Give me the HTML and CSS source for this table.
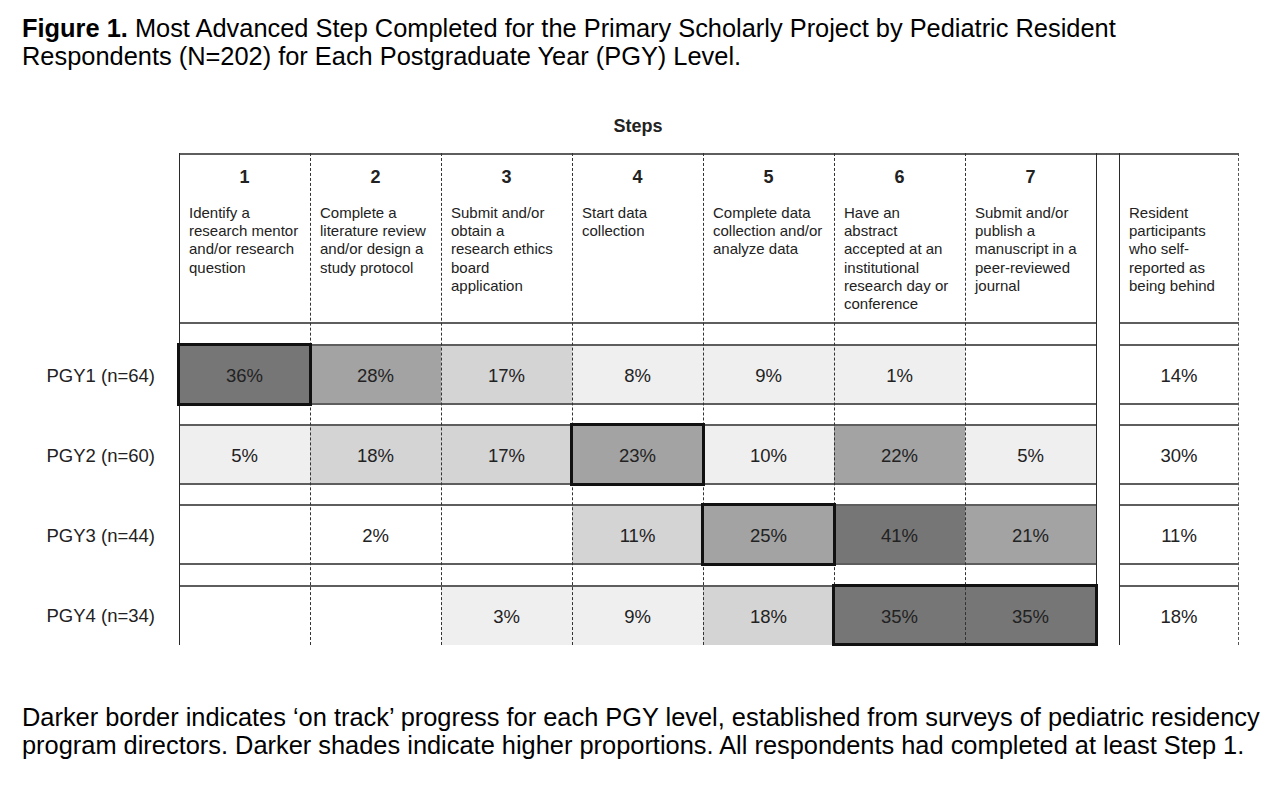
FILE: index.html
```html
<!DOCTYPE html>
<html lang="en">
<head>
<meta charset="utf-8">
<title>Figure 1</title>
<link rel="stylesheet" href="styles.css">
</head>
<body>
<h1 class="title"><b>Figure 1.</b> Most Advanced Step Completed for the Primary Scholarly Project by Pediatric Resident<br>Respondents (N=202) for Each Postgraduate Year (PGY) Level.</h1>

<div class="steps-label">Steps</div>

<div class="figure">
  <div class="grid base">
    <!-- header row -->
    <div class="lab"></div>
    <div class="hd"><div class="num">1</div><div class="desc">Identify a<br>research mentor<br>and/or research<br>question</div></div>
    <div class="hd"><div class="num">2</div><div class="desc">Complete a<br>literature review<br>and/or design a<br>study protocol</div></div>
    <div class="hd"><div class="num">3</div><div class="desc">Submit and/or<br>obtain a<br>research ethics<br>board<br>application</div></div>
    <div class="hd"><div class="num">4</div><div class="desc">Start data<br>collection</div></div>
    <div class="hd"><div class="num">5</div><div class="desc">Complete data<br>collection and/or<br>analyze data</div></div>
    <div class="hd"><div class="num">6</div><div class="desc">Have an<br>abstract<br>accepted at an<br>institutional<br>research day or<br>conference</div></div>
    <div class="hd"><div class="num">7</div><div class="desc">Submit and/or<br>publish a<br>manuscript in a<br>peer-reviewed<br>journal</div></div>
    <div class="gaphd"></div>
    <div class="hd"><div class="num"></div><div class="desc">Resident<br>participants<br>who self-<br>reported as<br>being behind</div></div>

    <div class="spacer"></div>

    <!-- PGY1 -->
    <div class="lab">PGY1 (n=64)</div>
    <div class="cell s4">36%</div>
    <div class="cell s3">28%</div>
    <div class="cell s2">17%</div>
    <div class="cell s1">8%</div>
    <div class="cell s1">9%</div>
    <div class="cell s1">1%</div>
    <div class="cell"></div>
    <div class="gap"></div>
    <div class="cell">14%</div>

    <div class="spacer"></div>

    <!-- PGY2 -->
    <div class="lab">PGY2 (n=60)</div>
    <div class="cell s1">5%</div>
    <div class="cell s2">18%</div>
    <div class="cell s2">17%</div>
    <div class="cell s3">23%</div>
    <div class="cell s1">10%</div>
    <div class="cell s3">22%</div>
    <div class="cell s1">5%</div>
    <div class="gap"></div>
    <div class="cell">30%</div>

    <div class="spacer"></div>

    <!-- PGY3 -->
    <div class="lab">PGY3 (n=44)</div>
    <div class="cell"></div>
    <div class="cell">2%</div>
    <div class="cell"></div>
    <div class="cell s2">11%</div>
    <div class="cell s3">25%</div>
    <div class="cell s4">41%</div>
    <div class="cell s3">21%</div>
    <div class="gap"></div>
    <div class="cell">11%</div>

    <div class="spacer"></div>

    <!-- PGY4 -->
    <div class="lab">PGY4 (n=34)</div>
    <div class="cell last"></div>
    <div class="cell last"></div>
    <div class="cell last s1">3%</div>
    <div class="cell last s1">9%</div>
    <div class="cell last s2">18%</div>
    <div class="cell last s4">35%</div>
    <div class="cell last s4">35%</div>
    <div class="gap"></div>
    <div class="cell last">18%</div>
  </div>

  <div class="grid overlay" aria-hidden="true">
    <div class="vl solid c2"></div>
    <div class="vl dash c3"></div>
    <div class="vl dash c4"></div>
    <div class="vl dash c5"></div>
    <div class="vl dash c6"></div>
    <div class="vl dash c7"></div>
    <div class="vl dash c8"></div>
    <div class="vl solid c9"></div>
    <div class="vl solid edge c10"></div>

    <div class="box b1"></div>
    <div class="box b2"></div>
    <div class="box b3"></div>
    <div class="box b4"></div>
  </div>
</div>

<p class="note">Darker border indicates ‘on track’ progress for each PGY level, established from surveys of pediatric residency<br>program directors. Darker shades indicate higher proportions. All respondents had completed at least Step 1.</p>
</body>
</html>
```

FILE: styles.css
```css
* { box-sizing: border-box; }

html, body {
  margin: 0;
  padding: 0;
  background: #ffffff;
}

body {
  font-family: "Liberation Sans", Arial, Helvetica, sans-serif;
  color: #000;
  width: 1286px;
}

.title {
  margin: 0;
  padding: 14px 0 0 22px;
  font-size: 25.4px;
  line-height: 28px;
  font-weight: normal;
}

.title b { font-weight: bold; }

.steps-label {
  margin: 45px 0 0 179px;
  width: 918px;
  text-align: center;
  font-weight: bold;
  font-size: 18px;
  line-height: 22px;
  color: #222;
}

.figure {
  margin-top: 16px;
  display: grid;
}

.grid {
  grid-area: 1 / 1;
  display: grid;
  grid-template-columns: 179px repeat(7, 131px) 23px 120px;
  grid-template-rows: 171px 20px 61px 19px 61px 19px 61px 20px 60px;
}

.overlay { pointer-events: none; }

/* header cells */
.hd {
  border-top: 2px solid #5e5e5e;
  border-bottom: 2px solid #5e5e5e;
  padding: 11px 6px 0 10px;
  color: #222;
}

.num {
  height: 22px;
  line-height: 22px;
  text-align: center;
  font-weight: bold;
  font-size: 18px;
  padding-right: 4px;
}

.desc {
  margin-top: 16px;
  font-size: 15px;
  line-height: 18.2px;
}

.gaphd { border-top: 2px solid #5e5e5e; }

.spacer { grid-column: 1 / -1; }

.lab {
  display: flex;
  align-items: center;
  justify-content: flex-end;
  padding: 2px 24px 0 0;
  font-size: 18.5px;
  color: #222;
}

.cell {
  display: flex;
  align-items: center;
  justify-content: center;
  border-top: 2px solid #5e5e5e;
  border-bottom: 2px solid #5e5e5e;
  padding-top: 2px;
  font-size: 18.5px;
  color: #222;
  background: #ffffff;
}

.cell.last { border-bottom: none; }

.s1 { background: #efefef; }
.s2 { background: #d4d4d4; }
.s3 { background: #a3a3a3; }
.s4 { background: #767676; }

/* vertical rules */
.vl { grid-row: 1 / -1; }
.vl.solid { border-left: 1px solid #2a2a2a; }
.vl.dash { border-left: 1px dashed #333; }
.vl.edge { border-right: 1px dashed #555; }

.c2 { grid-column: 2; }
.c3 { grid-column: 3; }
.c4 { grid-column: 4; }
.c5 { grid-column: 5; }
.c6 { grid-column: 6; }
.c7 { grid-column: 7; }
.c8 { grid-column: 8; }
.c9 { grid-column: 9; }
.c10 { grid-column: 10; }

/* on-track boxes */
.box {
  border: 3px solid #111;
  margin: -1px -2px -1px -2px;
}
.b1 { grid-row: 3; grid-column: 2; }
.b2 { grid-row: 5; grid-column: 5; }
.b3 { grid-row: 7; grid-column: 6; }
.b4 { grid-row: 9; grid-column: 7 / 9; }

.note {
  margin: 58px 0 0 22px;
  font-size: 25.4px;
  line-height: 28px;
}
```
